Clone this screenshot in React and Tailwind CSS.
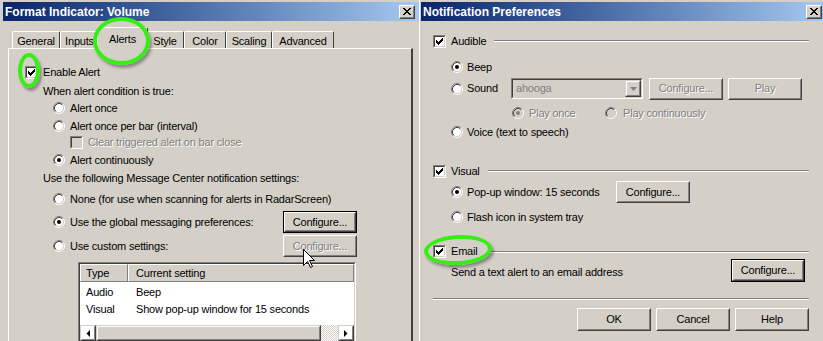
import React from 'react';

const FACE = '#d4d0c8';

function Check({ checked, disabled }) {
  return (
    <div className="w-[13px] h-[13px] shrink-0 border border-t-[#808080] border-l-[#808080] border-r-white border-b-white">
      <div
        className={`w-full h-full border border-t-[#404040] border-l-[#404040] border-r-[#d4d0c8] border-b-[#d4d0c8] flex items-center justify-center ${
          disabled ? 'bg-[#d4d0c8]' : 'bg-white'
        }`}
      >
        {checked && (
          <svg width="7" height="7" viewBox="0 0 7 7" shapeRendering="crispEdges">
            <rect x="6" y="0" width="1" height="3" fill="#000" />
            <rect x="5" y="1" width="1" height="3" fill="#000" />
            <rect x="4" y="2" width="1" height="3" fill="#000" />
            <rect x="3" y="3" width="1" height="3" fill="#000" />
            <rect x="2" y="4" width="1" height="3" fill="#000" />
            <rect x="1" y="3" width="1" height="3" fill="#000" />
            <rect x="0" y="2" width="1" height="3" fill="#000" />
          </svg>
        )}
      </div>
    </div>
  );
}

function Radio({ checked, disabled }) {
  return (
    <svg width="12" height="12" viewBox="0 0 12 12" className="shrink-0">
      <circle cx="6" cy="6" r="4.5" fill={disabled ? FACE : '#fff'} />
      <path d="M2.11 9.89 A5.5 5.5 0 0 1 9.89 2.11" fill="none" stroke="#808080" />
      <path d="M9.89 2.11 A5.5 5.5 0 0 1 2.11 9.89" fill="none" stroke="#fff" />
      <path d="M2.82 9.18 A4.5 4.5 0 0 1 9.18 2.82" fill="none" stroke="#404040" />
      <path d="M9.18 2.82 A4.5 4.5 0 0 1 2.82 9.18" fill="none" stroke={FACE} />
      {checked && <circle cx="6" cy="6" r="2" fill={disabled ? '#808080' : '#000'} />}
    </svg>
  );
}

function Btn({ children, className = '', isDefault, disabled }) {
  const face = (
    <div className="h-full border border-t-white border-l-white border-r-[#404040] border-b-[#404040]">
      <div className="h-full border border-t-[#d4d0c8] border-l-[#d4d0c8] border-r-[#808080] border-b-[#808080] flex items-center justify-center">
        <span className={disabled ? 'text-[#808080] [text-shadow:1px_1px_0_#fff]' : ''}>{children}</span>
      </div>
    </div>
  );
  return <div className={`shrink-0 ${isDefault ? 'border border-black' : ''} ${className}`}>{face}</div>;
}

function Label({ children, disabled, className = '' }) {
  return (
    <span className={`whitespace-nowrap ${disabled ? 'text-[#808080] [text-shadow:1px_1px_0_#fff]' : ''} ${className}`}>
      {children}
    </span>
  );
}

function CloseBtn() {
  return (
    <div className="w-[16px] h-[14px] border border-t-white border-l-white border-r-[#404040] border-b-[#404040] bg-[#d4d0c8]">
      <div className="w-full h-full border border-t-[#d4d0c8] border-l-[#d4d0c8] border-r-[#808080] border-b-[#808080] flex items-center justify-center">
        <svg width="8" height="7" viewBox="0 0 8 7" shapeRendering="crispEdges">
          <path d="M0 0h2v1h1v1h2V1h1V0h2v1H7v1H6v1H5v1h1v1h1v1h1v1H6V6H5V5H3v1H2v1H0V6h1V5h1V4h1V3H2V2H1V1H0z" fill="#000" />
        </svg>
      </div>
    </div>
  );
}

function TitleBar({ title }) {
  return (
    <div className="h-[19px] shrink-0 flex items-center justify-between bg-linear-to-r from-[#0a246a] to-[#a6caf0] pl-[2px] pr-[4px]">
      <span className="text-white font-bold text-[12px] tracking-[0px] whitespace-nowrap">{title}</span>
      <CloseBtn />
    </div>
  );
}

function Etched({ className = '' }) {
  return <div className={`h-[2px] border-t border-t-[#808080] border-b border-b-white ${className}`} />;
}

const TABS = [
  { name: 'General', w: 'w-[48px]' },
  { name: 'Inputs', w: 'w-[39px]' },
  { name: 'Alerts', w: 'w-[51px]', active: true },
  { name: 'Style', w: 'w-[38px]' },
  { name: 'Color', w: 'w-[42px]' },
  { name: 'Scaling', w: 'w-[46px]' },
  { name: 'Advanced', w: 'w-[62px]' },
];

function Tab({ name, w, active }) {
  if (active) {
    return (
      <div className={`${w} h-[22px] -mx-[2px] -mb-[1px] z-10 relative bg-[#d4d0c8] border-l border-t border-l-white border-t-white border-r border-r-[#404040] rounded-t-[2px] flex justify-center pt-[6px]`}>
        {name}
      </div>
    );
  }
  return (
    <div className={`${w} h-[17px] bg-[#d4d0c8] border-l border-t border-l-white border-t-white border-r border-r-[#404040] rounded-t-[2px] flex justify-center pt-[4px]`}>
      {name}
    </div>
  );
}

function ScrollArrow({ dir }) {
  return (
    <div className="w-[16px] h-full border border-t-[#d4d0c8] border-l-[#d4d0c8] border-r-[#404040] border-b-[#404040]">
      <div className="w-full h-full border border-t-white border-l-white border-r-[#808080] border-b-[#808080] flex items-center justify-center">
        <svg width="4" height="7" viewBox="0 0 4 7">
          {dir === 'left' ? <path d="M4 0v7L0.5 3.5z" fill="#000" /> : <path d="M0 0v7l3.5-3.5z" fill="#000" />}
        </svg>
      </div>
    </div>
  );
}

function FormatIndicator() {
  return (
    <div className="w-[419px] h-full shrink-0 flex flex-col pt-[2px] pl-[3px]">
      <TitleBar title="Format Indicator: Volume" />

      {/* tabs */}
      <div className="mt-[6px] ml-[5px] pl-[4px] flex items-end h-[21px]">
        {TABS.map(t => (
          <Tab key={t.name} {...t} />
        ))}
      </div>

      {/* tab page */}
      <div className="ml-[5px] w-[405px] flex-1 border-l border-t border-l-white border-t-white border-r-2 border-r-[#404040] flex flex-col">
        <div className="mt-[15px] ml-[16px] h-[16px] flex items-center gap-[5px]">
          <Check checked />
          <Label>Enable Alert</Label>
        </div>
        <div className="mt-[3px] ml-[34px] h-[16px] flex items-center">
          <Label>When alert condition is true:</Label>
        </div>
        <div className="mt-[1px] ml-[44px] h-[16px] flex items-center gap-[5px]">
          <Radio />
          <Label>Alert once</Label>
        </div>
        <div className="mt-[2px] ml-[44px] h-[16px] flex items-center gap-[5px]">
          <Radio />
          <Label>Alert once per bar (interval)</Label>
        </div>
        <div className="ml-[61px] h-[16px] flex items-center gap-[5px]">
          <Check disabled />
          <Label disabled>Clear triggered alert on bar close</Label>
        </div>
        <div className="mt-[2px] ml-[44px] h-[16px] flex items-center gap-[5px]">
          <Radio checked />
          <Label>Alert continuously</Label>
        </div>
        <div className="mt-[2px] ml-[34px] h-[16px] flex items-center">
          <Label>Use the following Message Center notification settings:</Label>
        </div>
        <div className="mt-[5px] ml-[44px] h-[16px] flex items-center gap-[5px]">
          <Radio />
          <Label>None (for use when scanning for alerts in RadarScreen)</Label>
        </div>
        <div className="mt-[4px] ml-[44px] h-[22px] flex items-center">
          <div className="w-[230px] flex items-center gap-[5px]">
            <Radio checked />
            <Label>Use the global messaging preferences:</Label>
          </div>
          <Btn isDefault className="w-[74px] h-[22px]">Configure...</Btn>
        </div>
        <div className="mt-[2px] ml-[44px] h-[22px] flex items-center">
          <div className="w-[230px] flex items-center gap-[5px]">
            <Radio />
            <Label>Use custom settings:</Label>
          </div>
          <Btn disabled className="w-[74px] h-[22px]">Configure...</Btn>
        </div>

        {/* list view */}
        <div className="mt-[5px] ml-[69px] w-[278px] h-[82px] shrink-0 border border-t-[#808080] border-l-[#808080] border-r-white border-b-white">
          <div className="w-full h-full border border-t-[#404040] border-l-[#404040] border-r-[#d4d0c8] border-b-[#d4d0c8] bg-white flex flex-col">
            <div className="h-[18px] flex shrink-0">
              <div className="w-[48px] h-full border border-t-white border-l-white border-r-[#808080] border-b-[#808080] bg-[#d4d0c8] pl-[5px] flex items-center">
                Type
              </div>
              <div className="flex-1 h-full border border-t-white border-l-white border-r-[#808080] border-b-[#808080] bg-[#d4d0c8] pl-[7px] flex items-center">
                Current setting
              </div>
            </div>
            <div className="h-[43px] pt-[2px] flex flex-col">
              <div className="h-[17px] flex items-center">
                <span className="w-[48px] pl-[6px]">Audio</span>
                <span className="pl-[8px]">Beep</span>
              </div>
              <div className="h-[17px] flex items-center">
                <span className="w-[48px] pl-[6px]">Visual</span>
                <span className="pl-[8px]">Show pop-up window for 15 seconds</span>
              </div>
            </div>
            <div className="h-[16px] flex">
              <ScrollArrow dir="left" />
              <div className="w-[225px] h-full border border-t-[#d4d0c8] border-l-[#d4d0c8] border-r-[#404040] border-b-[#404040]">
                <div className="w-full h-full border border-t-white border-l-white border-r-[#808080] border-b-[#808080] bg-[#d4d0c8]" />
              </div>
              <div className="flex-1 h-full bg-[repeating-conic-gradient(#fff_0%_25%,#d4d0c8_0%_50%)] bg-[length:2px_2px]" />
              <ScrollArrow dir="right" />
            </div>
          </div>
        </div>
      </div>
    </div>
  );
}

function NotificationPrefs() {
  return (
    <div className="flex-1 h-full flex flex-col border-l border-l-white pl-[1px] pt-[2px]">
      <TitleBar title="Notification Preferences" />
      <div className="flex flex-col pl-[12px] pr-[17px]">
        <div className="mt-[12px] h-[16px] flex items-center">
          <Check checked />
          <Label className="ml-[5px]">Audible</Label>
          <Etched className="flex-1 ml-[8px]" />
        </div>
        <div className="mt-[10px] ml-[18px] h-[16px] flex items-center gap-[4px]">
          <Radio checked />
          <Label>Beep</Label>
        </div>
        <div className="mt-[2px] ml-[18px] h-[23px] flex items-center">
          <div className="w-[60px] flex items-center gap-[4px]">
            <Radio />
            <Label>Sound</Label>
          </div>
          <div className="w-[132px] h-[21px] border border-t-[#808080] border-l-[#808080] border-r-white border-b-white">
            <div className="w-full h-full border border-t-[#404040] border-l-[#404040] border-r-[#d4d0c8] border-b-[#d4d0c8] bg-[#d4d0c8] flex items-center">
              <span className="flex-1 pl-[3px] text-[#808080]">ahooga</span>
              <div className="w-[16px] h-full border border-t-[#d4d0c8] border-l-[#d4d0c8] border-r-[#404040] border-b-[#404040]">
                <div className="w-full h-full border border-t-white border-l-white border-r-[#808080] border-b-[#808080] flex items-center justify-center">
                  <svg width="7" height="4" viewBox="0 0 7 4">
                    <path d="M0 0h7L3.5 4z" fill="#808080" />
                  </svg>
                </div>
              </div>
            </div>
          </div>
          <Btn disabled className="ml-[6px] w-[74px] h-[22px]">Configure...</Btn>
          <Btn disabled className="ml-[5px] w-[74px] h-[22px]">Play</Btn>
        </div>
        <div className="mt-[5px] ml-[79px] h-[16px] flex items-center">
          <div className="w-[93px] flex items-center gap-[5px]">
            <Radio checked disabled />
            <Label disabled>Play once</Label>
          </div>
          <div className="flex items-center gap-[6px]">
            <Radio disabled />
            <Label disabled>Play continuously</Label>
          </div>
        </div>
        <div className="mt-[3px] ml-[18px] h-[16px] flex items-center gap-[4px]">
          <Radio />
          <Label>Voice (text to speech)</Label>
        </div>

        <div className="mt-[23px] h-[16px] flex items-center">
          <Check checked />
          <Label className="ml-[5px]">Visual</Label>
          <Etched className="flex-1 ml-[8px]" />
        </div>
        <div className="mt-[2px] ml-[18px] h-[22px] flex items-center">
          <div className="w-[165px] flex items-center gap-[4px]">
            <Radio checked />
            <Label>Pop-up window: 15 seconds</Label>
          </div>
          <Btn className="w-[74px] h-[22px]">Configure...</Btn>
        </div>
        <div className="mt-[6px] ml-[18px] h-[16px] flex items-center gap-[4px]">
          <Radio />
          <Label>Flash icon in system tray</Label>
        </div>

        <div className="mt-[19px] h-[15px] flex items-center">
          <Check checked />
          <Label className="ml-[5px]">Email</Label>
          <Etched className="flex-1 ml-[12px]" />
        </div>
        <div className="h-[23px] flex items-center justify-between pl-[18px] pr-[4px]">
          <Label className="mt-[3px]">Send a text alert to an email address</Label>
          <Btn isDefault className="w-[74px] h-[23px]">Configure...</Btn>
        </div>

        <Etched className="mt-[16px]" />
        <div className="mt-[8px] ml-[144px] flex gap-[5px]">
          <Btn className="w-[74px] h-[23px]">OK</Btn>
          <Btn className="w-[74px] h-[23px]">Cancel</Btn>
          <Btn className="w-[74px] h-[23px]">Help</Btn>
        </div>
      </div>
    </div>
  );
}

export default function App() {
  return (
    <div className="relative w-[823px] h-[341px] overflow-hidden flex bg-[#d4d0c8] text-black text-[11px] tracking-[-0.2px] leading-none font-['Liberation_Sans',Arial,sans-serif]">
      <FormatIndicator />
      <NotificationPrefs />

      {/* green highlight rings */}
      <div className="absolute left-[93px] top-[17px] w-[57px] h-[48px] rounded-[50%] border-[4px] border-[#36ee14] shadow-[2px_3px_3px_rgba(0,0,0,0.35)] z-20" />
      <div className="absolute left-[18px] top-[53px] w-[22px] h-[35px] rounded-[50%] border-[4px] border-[#36ee14] shadow-[2px_3px_3px_rgba(0,0,0,0.35)] z-20" />
      <div className="absolute left-[424px] top-[235px] w-[68px] h-[30px] rounded-[50%] border-[4px] border-[#36ee14] shadow-[2px_3px_3px_rgba(0,0,0,0.35)] -rotate-3 z-20" />

      {/* mouse pointer */}
      <svg className="absolute left-[303px] top-[249px] z-30" width="13" height="20" viewBox="0 0 13 20">
        <path d="M0.5 0.5V16.5L4.5 12.5L7.5 18.5L9.5 17.5L6.5 11.5H11.5Z" fill="#fff" stroke="#000" strokeLinejoin="miter" />
      </svg>
    </div>
  );
}
